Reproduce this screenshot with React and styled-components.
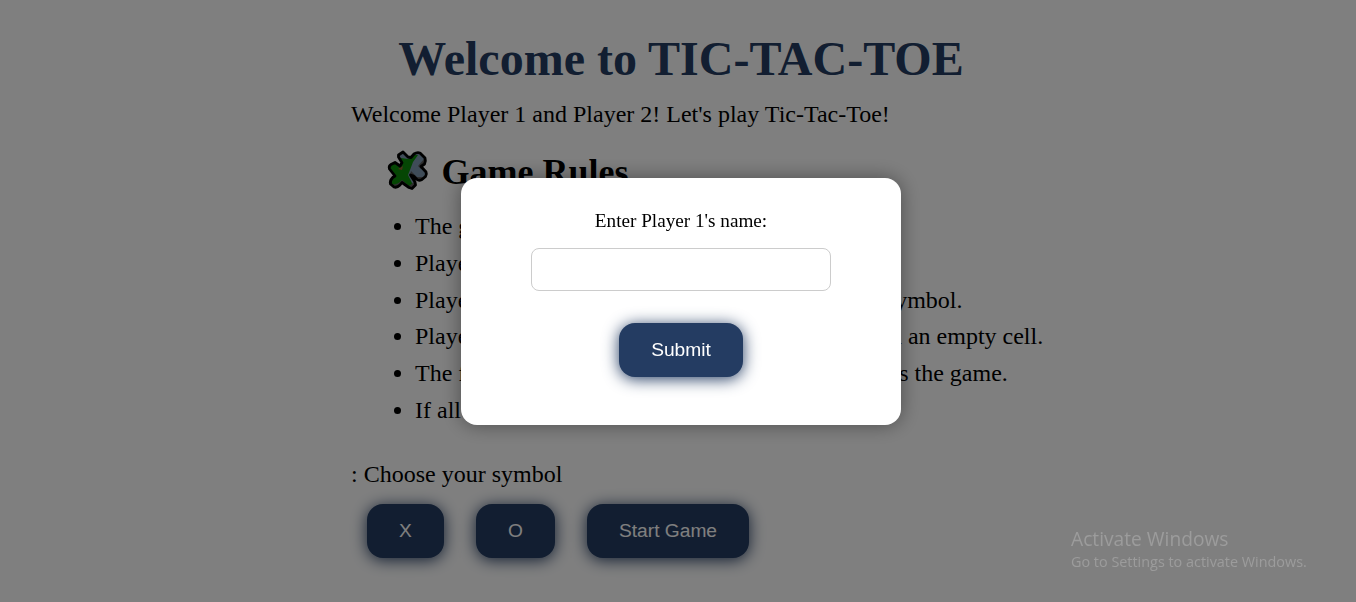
import React from "react";
import styled, { createGlobalStyle } from "styled-components";

const GlobalStyle = createGlobalStyle`
  html, body { margin: 0; height: 100%; overflow: hidden; background: #fff; }
  * { box-sizing: border-box; }
  body { font-family: "Liberation Serif", "Times New Roman", serif; font-size: 24px; color: #000; }
`;

const Page = styled.main`
  width: 660px;
  height: 602px;
  margin-left: 351px;
  padding-top: 31px;
`;

const Title = styled.h1`
  margin: 0;
  height: 55px;
  line-height: 55px;
  font-size: 48px;
  text-align: center;
  color: #243c62;
  white-space: nowrap;
`;

const Text = styled.p`
  margin: ${(p) => p.$top || 0}px 0 0;
  line-height: 28px;
  white-space: nowrap;
`;

const RulesHeading = styled.h2`
  display: flex;
  align-items: center;
  gap: 12.5px;
  margin: 21px 0 0 35px;
  height: 46px;
  font-size: 36px;
  line-height: 46px;
`;

const RuleList = styled.ul`
  height: 221px;
  margin: 13px 0 0;
  padding: 0 0 0 64px;
`;

const Rule = styled.li`
  height: 36.8px;
  line-height: 36.8px;
  white-space: nowrap;
`;

const RuleText = styled.span`
  display: inline-flex;
  justify-content: space-between;
  vertical-align: top;
  width: ${(p) => (p.$width ? p.$width + "px" : "auto")};
`;

const Buttons = styled.div`
  display: flex;
  gap: 32px;
  padding: 16px 16px;
`;

const Button = styled.button`
  height: 54px;
  width: ${(p) => p.$width}px;
  padding: 0 0 1px;
  border: 0;
  border-radius: 16px;
  background: #243c62;
  color: #fff;
  font: 19.2px "Liberation Sans", Arial, sans-serif;
  box-shadow: 0 2px 16px #243c62;
`;

const Overlay = styled.div`
  position: fixed;
  inset: 0;
  display: flex;
  align-items: flex-start;
  justify-content: center;
  padding: 178px 0 0 6px;
  background: rgba(0, 0, 0, 0.5);
`;

const Dialog = styled.form`
  display: flex;
  flex-direction: column;
  align-items: center;
  width: 440px;
  height: 247px;
  padding-top: 32px;
  border-radius: 16px;
  background: #fff;
  box-shadow: 0 0 20px rgba(0, 0, 0, 0.4);
`;

const Label = styled.label`
  height: 22px;
  font-size: 19.2px;
  line-height: 22px;
`;

const NameInput = styled.input`
  width: 300px;
  height: 43px;
  margin: 16px 0 32px;
  padding: 0 10px;
  border: 1px solid #ccc;
  border-radius: 8px;
  background: #fff;
  outline: none;
`;

const Watermark = styled.aside`
  position: fixed;
  left: 1071px;
  top: 526px;
  color: #9c9c9c;
  font-family: "Open Sans", "Noto Sans", sans-serif;
  white-space: nowrap;
`;

const WatermarkTitle = styled.div`
  font-size: 19.2px;
  line-height: 26px;
`;

const WatermarkHint = styled.div`
  font-size: 14.4px;
  line-height: 20px;
`;

const shape =
  "M17 4 L22 9 L25 9.5 L28 6 Q31 4 34 5 L39 10 Q40 13 38.5 16 L35 18.5 L40 24 Q41 26 39.5 28.5 L36 31.5 Q33 33 31 31.5 L27.5 28 L24.5 27 L29 34 L29.5 37 L26 40.5 L23 39.5 L16 34.5 L14 37 Q11 40 8 39 L4.5 36 Q3.5 33 6.7 29.5 L9 28 L3.5 21 Q2.5 18 5 16.5 L9 14.5 L14 18 L16 14.7 L12.5 9 L12.5 7 Z";

const PuzzleIcon = () => (
  <svg width="43" height="48" viewBox="0 0 43 48" aria-hidden="true">
    <defs>
      <clipPath id="piece">
        <path d={shape} />
      </clipPath>
    </defs>
    <g clipPath="url(#piece)">
      <rect width="43" height="44" fill="#7e98b0" />
      <path d="M0 12 L14 18 L15 10 L22 11 L28 7 L32 7 L27 14 L24 22 L22 27 L27 37 L22 44 L0 44Z" fill="#0a8c08" />
      <path d="M40 9 L42 15 L35 21 L32 18 L38 11Z M43 25 L36 34 L24 27 L25 23 L31 29 L37 29Z M4 36 Q10 38 16 32 L23 38 L29 33 L34 38 L24 44 L5 42Z" fill="#5c5c5c" />
      <path d="M12 21 L17 18 L16 22Z" fill="#995d35" />
    </g>
    <path d={shape} fill="none" stroke="#000" strokeWidth="2.8" strokeLinejoin="round" />
  </svg>
);

const rules = [
  { lead: "The game is played on a 3x3 grid." },
  { lead: "Player 1 is X and Player 2 is O." },
  { lead: "Players choose their", tail: "symbol.", width: 547.5 },
  { lead: "Players take turns placing", tail: "in an empty cell.", width: 628.2 },
  { lead: "The first to get three in a row", tail: "wins the game.", width: 592.8 },
  { lead: "If all cells are filled, it's a draw." },
];

export default function App() {
  return (
    <>
      <GlobalStyle />
      <Page>
        <Title>Welcome to TIC-TAC-TOE</Title>
        <Text $top={14}>Welcome Player 1 and Player 2! Let's play Tic-Tac-Toe!</Text>
        <RulesHeading>
          <PuzzleIcon />
          Game Rules
        </RulesHeading>
        <RuleList>
          {rules.map((rule) => (
            <Rule key={rule.lead}>
              <RuleText $width={rule.width}>
                <span>{rule.lead}</span>
                {rule.tail && <span>{rule.tail}</span>}
              </RuleText>
            </Rule>
          ))}
        </RuleList>
        <Text $top={31}>: Choose your symbol</Text>
        <Buttons>
          <Button $width={77}>X</Button>
          <Button $width={79}>O</Button>
          <Button $width={162}>Start Game</Button>
        </Buttons>
      </Page>
      <Overlay>
        <Dialog>
          <Label htmlFor="name">Enter Player 1's name:</Label>
          <NameInput id="name" />
          <Button type="button" $width={124}>Submit</Button>
        </Dialog>
      </Overlay>
      <Watermark>
        <WatermarkTitle>Activate Windows</WatermarkTitle>
        <WatermarkHint>Go to Settings to activate Windows.</WatermarkHint>
      </Watermark>
    </>
  );
}
